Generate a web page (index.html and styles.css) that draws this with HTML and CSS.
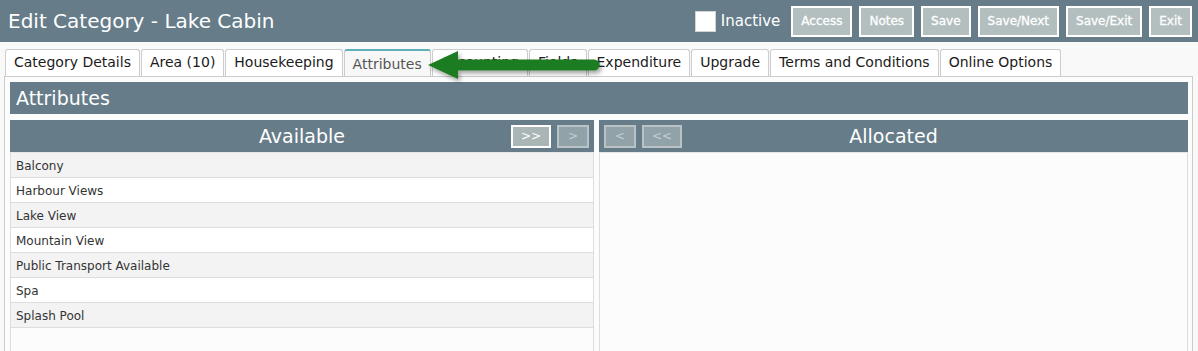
FILE: index.html
```html
<!DOCTYPE html>
<html lang="en">
<head>
    <meta charset="UTF-8">
    <title>Edit Category - Lake Cabin</title>
    <link rel="stylesheet" href="styles.css">
</head>
<body>
    <div class="topbar">
        <h1>Edit Category - Lake Cabin</h1>
        <div class="actions">
            <label class="inactive"><span class="check"></span>Inactive</label>
            <button class="btn">Access</button>
            <button class="btn">Notes</button>
            <button class="btn">Save</button>
            <button class="btn">Save/Next</button>
            <button class="btn">Save/Exit</button>
            <button class="btn">Exit</button>
        </div>
    </div>

    <div class="page">
        <div class="tabs">
            <div class="tab">Category Details</div>
            <div class="tab">Area (10)</div>
            <div class="tab">Housekeeping</div>
            <div class="tab active">Attributes</div>
            <div class="tab">Accounting</div>
            <div class="tab">Fields</div>
            <div class="tab">Expenditure</div>
            <div class="tab">Upgrade</div>
            <div class="tab">Terms and Conditions</div>
            <div class="tab">Online Options</div>

            <svg class="pointer" width="184" height="40" viewBox="0 0 184 40">
                <defs>
                    <filter id="shadow" x="-10%" y="-30%" width="120%" height="170%">
                        <feDropShadow dx="2" dy="3" stdDeviation="2" flood-color="#000" flood-opacity="0.35"/>
                    </filter>
                </defs>
                <g filter="url(#shadow)">
                    <line x1="30" y1="18" x2="168" y2="18" stroke="#1e7b24" stroke-width="11" stroke-linecap="round"/>
                    <polygon points="2,18 32,4 32,32" fill="#1e7b24"/>
                </g>
            </svg>
        </div>

        <div class="panel">
            <div class="section-title">Attributes</div>

            <div class="columns">
                <div class="column">
                    <div class="col-head">
                        <span></span>
                        <span class="col-title">Available</span>
                        <div class="movers right">
                            <button class="move">&gt;&gt;</button>
                            <button class="move off">&gt;</button>
                        </div>
                    </div>
                    <ul class="list">
                        <li>Balcony</li>
                        <li>Harbour Views</li>
                        <li>Lake View</li>
                        <li>Mountain View</li>
                        <li>Public Transport Available</li>
                        <li>Spa</li>
                        <li>Splash Pool</li>
                    </ul>
                </div>

                <div class="column">
                    <div class="col-head">
                        <div class="movers">
                            <button class="move off">&lt;</button>
                            <button class="move off">&lt;&lt;</button>
                        </div>
                        <span class="col-title">Allocated</span>
                        <span></span>
                    </div>
                    <ul class="list empty"></ul>
                </div>
            </div>
        </div>
    </div>
</body>
</html>
```

FILE: styles.css
```css
* {
    margin: 0;
    padding: 0;
    box-sizing: border-box;
}

body {
    font-family: 'DejaVu Sans', Verdana, sans-serif;
    background: #f9f9f9;
    color: #222;
    height: 351px;
    overflow: hidden;
}

.topbar {
    height: 42px;
    background: #667c89;
    display: flex;
    align-items: center;
    justify-content: space-between;
    padding: 0 6px 0 8px;
}

.topbar h1 {
    color: #fff;
    font-size: 20px;
    font-weight: normal;
}

.actions {
    display: flex;
    align-items: center;
    gap: 7px;
}

.inactive {
    display: flex;
    align-items: center;
    color: #fff;
    font-size: 15px;
    margin-right: 4px;
}

.check {
    width: 21px;
    height: 21px;
    background: #fff;
    border: 1px solid #d4d4d4;
    margin-right: 5px;
}

.btn {
    height: 31px;
    padding: 0 8px;
    border: 2px solid #fff;
    background: #b3bfbf;
    color: #fff;
    font-family: inherit;
    font-size: 12px;
    -webkit-text-stroke: 0.3px #fff;
}

.page {
    padding: 7px 5px 0 4px;
}

.tabs {
    position: relative;
    display: flex;
    gap: 1px;
    padding-left: 1px;
    height: 27px;
}

.tab {
    padding: 0 8px;
    line-height: 25px;
    font-size: 14px;
    background: #fff;
    border: 1px solid #ccc;
    border-bottom: none;
    border-radius: 3px 3px 0 0;
    color: #1b1b1b;
}

.tab.active {
    background: #f7f7f7;
    color: #555;
    border-top: 2px solid #5fb0b9;
    line-height: 26px;
}

.pointer {
    position: absolute;
    left: 422px;
    top: -2px;
}

.panel {
    border: 1px solid #ccc;
    border-bottom: none;
    background: #fcfcfc;
    padding: 5px 4px 0 5px;
    height: 275px;
}

.section-title {
    background: #667c89;
    color: #fff;
    height: 32px;
    line-height: 32px;
    font-size: 19px;
    padding-left: 6px;
}

.columns {
    display: grid;
    grid-template-columns: 584px 1fr;
    gap: 5px;
    margin-top: 6px;
}

.col-head {
    height: 32px;
    background: #667c89;
    display: grid;
    grid-template-columns: 1fr auto 1fr;
    align-items: center;
}

.col-title {
    color: #fff;
    font-size: 19px;
}

.movers {
    display: flex;
    gap: 6px;
    padding: 0 5px;
}

.movers.right {
    justify-content: flex-end;
}

.move {
    height: 23px;
    min-width: 32px;
    padding: 0 8px;
    border: 2px solid #fff;
    background: #aab6b6;
    color: #fff;
    font-family: inherit;
    font-size: 12px;
}

.move.off {
    border-color: #b9c3c6;
    background: #91a2a9;
    color: #c4ced1;
}

.list {
    list-style: none;
    border-left: 1px solid #ddd;
    border-right: 1px solid #ddd;
    border-top: 1px solid #e6e6e6;
    height: 200px;
}

.list.empty {
    background: #fcfcfc;
}

.list li {
    height: 25px;
    padding-top: 2px;
    line-height: 22px;
    padding-left: 5px;
    font-size: 12px;
    color: #333;
    border-bottom: 1px solid #ddd;
    background: #fff;
}

.list li:nth-child(odd) {
    background: #f3f3f3;
}
```
